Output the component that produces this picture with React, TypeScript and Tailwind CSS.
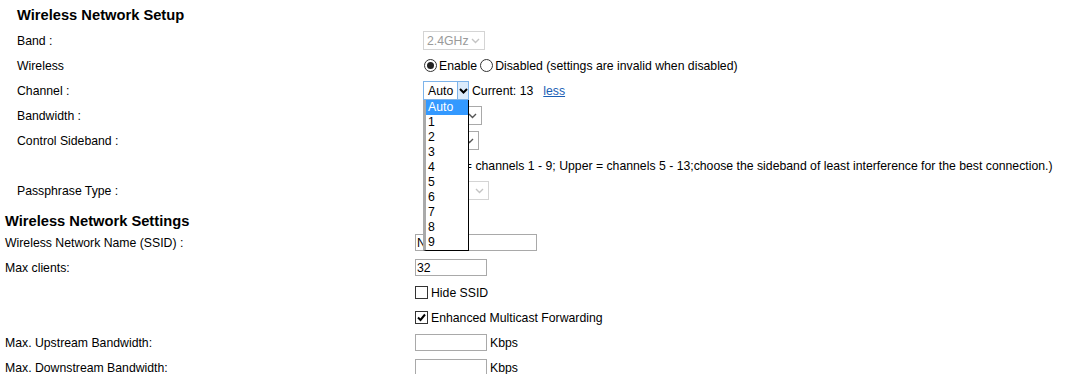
import React from "react";

const Chevron = ({ color = "#000", w = 1.6 }: { color?: string; w?: number }) => (
  <svg width="9" height="6" viewBox="0 0 9 6" fill="none">
    <path d="M1 1 L4.5 4.5 L8 1" stroke={color} strokeWidth={w} />
  </svg>
);

const FakeSelect = ({
  width,
  text,
  disabled,
}: {
  width: number;
  text: string;
  disabled?: boolean;
}) => (
  <div
    className={`flex h-[19px] items-center justify-between border pl-[3px] pr-[4px] ${
      disabled ? "border-[#d4d4d4] text-[#9a9a9a]" : "border-[#a9a9a9] text-black"
    }`}
    style={{ width }}
  >
    <span>{text}</span>
    <Chevron color={disabled ? "#c4c4c4" : "#555"} w={1.4} />
  </div>
);

const Row1 = ({ label, children }: { label?: string; children?: React.ReactNode }) => (
  <div className="flex h-[25px] items-center">
    <div className="w-[406px] shrink-0">{label}</div>
    <div className="flex items-center">{children}</div>
  </div>
);

const Row2 = ({ label, children }: { label?: string; children?: React.ReactNode }) => (
  <div className="flex h-[25px] items-center">
    <div className="w-[410px] shrink-0">{label}</div>
    <div className="flex items-center">{children}</div>
  </div>
);

const Radio = ({ checked }: { checked?: boolean }) => (
  <span className="flex h-[13px] w-[13px] items-center justify-center rounded-full border border-[#333] bg-white">
    {checked && <span className="h-[7px] w-[7px] rounded-full bg-[#222]" />}
  </span>
);

const Checkbox = ({ checked }: { checked?: boolean }) => (
  <span className="flex h-[13px] w-[13px] items-center justify-center border border-[#333] bg-white">
    {checked && (
      <svg width="11" height="11" viewBox="0 0 11 11">
        <path d="M2 5.5 L4.5 8 L9 2.5" stroke="#000" strokeWidth="2" fill="none" />
      </svg>
    )}
  </span>
);

const TextBox = ({ width, value }: { width: number; value?: string }) => (
  <div
    className="flex h-[17px] items-center overflow-hidden whitespace-nowrap border border-[#a9a9a9] pl-[1px] text-black"
    style={{ width }}
  >
    {value}
  </div>
);

export default function App() {
  const items = ["Auto", "1", "2", "3", "4", "5", "6", "7", "8", "9"];
  return (
    <div
      className="h-[374px] w-[1067px] overflow-hidden bg-white pl-[5px] text-[12.25px] leading-[14px] text-black"
      style={{ fontFamily: '"Liberation Sans", Arial, sans-serif' }}
    >
      <div className="pl-[12px]">
        <div className="h-[28px] pt-[8px] text-[14.7px] font-bold leading-[15px]">
          Wireless Network Setup
        </div>
        <Row1 label="Band :">
          <FakeSelect width={62} text="2.4GHz" disabled />
        </Row1>
        <Row1 label="Wireless">
          <span className="ml-[1px]">
            <Radio checked />
          </span>
          <span className="ml-[2px]">Enable</span>
          <span className="ml-[3px]">
            <Radio />
          </span>
          <span className="ml-[2px]">Disabled (settings are invalid when disabled)</span>
        </Row1>
        <Row1 label="Channel :">
          <div className="relative">
            <div className="flex h-[19px] w-[46px] items-stretch border border-[#7eb4ea]">
              <span className="flex flex-1 items-center pl-[4px]">Auto</span>
              <span className="flex w-[11px] items-center justify-center border-l border-[#7eb4ea] bg-[#dcecfc]">
                <Chevron color="#000" w={2} />
              </span>
            </div>
            <div className="absolute left-0 top-[19px] z-10 w-[46px] border-b border-l-[3px] border-r border-b-black border-l-[#aaaaaa] border-r-black bg-white">
              {items.map((it, i) => (
                <div
                  key={it}
                  className={`h-[15px] pl-[2px] leading-[15px] ${
                    i === 0 ? "bg-[#3399ff] text-white" : ""
                  }`}
                >
                  {it}
                </div>
              ))}
            </div>
          </div>
          <span className="ml-[3px]">Current: 13</span>
          <a className="ml-[10px] text-[#1c5fb5] underline" href="#">
            less
          </a>
        </Row1>
        <Row1 label="Bandwidth :">
          <FakeSelect width={59} text="" />
        </Row1>
        <Row1 label="Control Sideband :">
          <FakeSelect width={56} text="" />
        </Row1>
        <Row1>
          <span className="ml-[1px] whitespace-nowrap">
            (Lower = channels 1 - 9; Upper = channels 5 - 13;choose the sideband of least interference for the best connection.)
          </span>
        </Row1>
        <Row1 label="Passphrase Type :">
          <FakeSelect width={66} text="" disabled />
        </Row1>
      </div>
      <div className="h-[27px] pt-[11px] text-[14.7px] font-bold leading-[15px]">
        Wireless Network Settings
      </div>
      <Row2 label="Wireless Network Name (SSID) :">
        <TextBox width={122} value="Netgear" />
      </Row2>
      <Row2 label="Max clients:">
        <TextBox width={72} value="32" />
      </Row2>
      <Row2>
        <Checkbox />
        <span className="ml-[3px]">Hide SSID</span>
      </Row2>
      <Row2>
        <Checkbox checked />
        <span className="ml-[3px]">Enhanced Multicast Forwarding</span>
      </Row2>
      <Row2 label="Max. Upstream Bandwidth:">
        <TextBox width={72} />
        <span className="ml-[3px]">Kbps</span>
      </Row2>
      <Row2 label="Max. Downstream Bandwidth:">
        <TextBox width={72} />
        <span className="ml-[3px]">Kbps</span>
      </Row2>
    </div>
  );
}
